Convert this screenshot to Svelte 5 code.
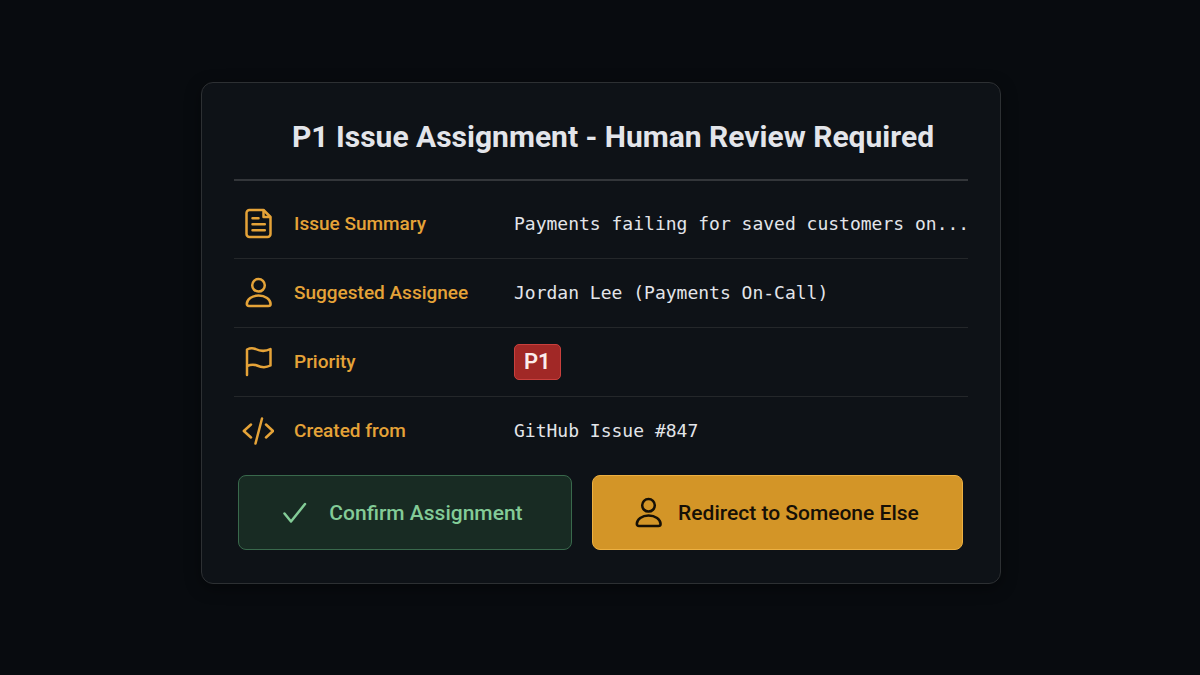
<script lang="ts">
  type IconName = "document" | "user" | "flag" | "code" | "check";

  type Field = {
    icon: IconName;
    label: string;
    value: string;
    isBadge?: boolean;
  };

  const fields: Field[] = [
    {
      icon: "document",
      label: "Issue Summary",
      value: "Payments failing for saved customers on..."
    },
    {
      icon: "user",
      label: "Suggested Assignee",
      value: "Jordan Lee (Payments On-Call)"
    },
    {
      icon: "flag",
      label: "Priority",
      value: "P1",
      isBadge: true
    },
    {
      icon: "code",
      label: "Created from",
      value: "GitHub Issue #847"
    }
  ];
</script>

{#snippet icon(name: IconName)}
  <svg class="icon" aria-hidden="true" viewBox="0 0 32 32">
    {#if name === "document"}
      <path d="M7.500 2H21.500L28.500 9V26a3 3 0 0 1-3 3H7.500a3 3 0 0 1-3-3V5a3 3 0 0 1 3-3Z" />
      <path d="M21.500 2.500V9H28M10.500 10.300H16.500M10.500 16.300H22.800M10.500 22.300H22.800" />
    {:else if name === "user"}
      <circle cx="16.500" cy="8.300" r="6.300" />
      <path d="M7 29c-1.500 0-2.200-.8-2.200-2C4.800 22.500 10 18.500 16.600 18.500S28.600 22.500 28.600 27c0 1.200-.7 2-2.200 2Z" />
    {:else if name === "flag"}
      <path d="M5 29V3.500C7 2.500 10 1.600 13.500 3C19 5.700 23 5.800 28.500 3V19.500C24 21.800 20 21.800 15 19.500C11 17.800 8 18.700 5 20" />
    {:else if name === "code"}
      <path d="M9 9.500 1.800 16l7.200 6.500M24 9.500l7 6.500-7 6.500M20 3.500l-6.500 25" />
    {:else}
      <path d="M1.500 16.500 8 24.500 22 7" />
    {/if}
  </svg>
{/snippet}

<main class="page">
  <section class="card" aria-labelledby="card-title">
    <header class="card-head">
      <h1 id="card-title">P1 Issue Assignment - Human Review Required</h1>
    </header>

    <dl class="fields">
      {#each fields as field (field.label)}
        <div class="field">
          {@render icon(field.icon)}
          <dt>{field.label}</dt>
          <dd>
            {#if field.isBadge}
              <span class="badge">{field.value}</span>
            {:else}
              {field.value}
            {/if}
          </dd>
        </div>
      {/each}
    </dl>

    <div class="actions">
      <button class="confirm" type="button">
        {@render icon("check")}
        <span>Confirm Assignment</span>
      </button>
      <button class="redirect" type="button">
        {@render icon("user")}
        <span>Redirect to Someone Else</span>
      </button>
    </div>
  </section>
</main>

<style>
  :global(body) {
    margin: 0;
    background: #080b0f;
  }

  .page {
    display: flex;
    align-items: center;
    justify-content: center;
    box-sizing: border-box;
    min-height: 100vh;
    padding: 14px 16px 24px 18px;
    color: #e3e5ea;
    font-family: Roboto, "Liberation Sans", sans-serif;
  }

  .card {
    box-sizing: border-box;
    width: 100%;
    max-width: 800px;
    padding: 0 32px 33px;
    border: 1px solid #2d3033;
    border-radius: 12px;
    background: #0e1217;
    box-shadow: 0 4px 16px rgb(0 0 0 / 40%);
  }

  .card-head {
    padding: 34px 0 22px 58px;
    border-bottom: 2px solid #33363a;
  }

  h1 {
    margin: 0;
    font-weight: 700;
    font-size: 30px;
    line-height: 40px;
  }

  .fields {
    margin: 0;
    padding: 9px 0;
  }

  .field {
    display: grid;
    grid-template-columns: 32px 200px 1fr;
    column-gap: 20px;
    align-items: center;
    box-sizing: border-box;
    min-height: 69px;
    padding-left: 8px;
    border-bottom: 1px solid #24272a;

    &:last-child {
      border-bottom: 0;
    }
  }

  .icon {
    flex: none;
    width: 32px;
    height: 32px;
    fill: none;
    stroke: currentColor;
    stroke-width: 2.5;
    stroke-linecap: round;
    stroke-linejoin: round;
  }

  .field .icon,
  dt {
    color: #e5a338;
  }

  dt {
    font-weight: 500;
    font-size: 19px;
    line-height: 24px;
  }

  dd {
    margin: 0;
    font-size: 18px;
    line-height: 24px;
    font-family: "DejaVu Sans Mono", "Liberation Mono", monospace;
    white-space: nowrap;
  }

  .badge {
    display: inline-block;
    padding: 4px 9px;
    border: 1px solid #c9403d;
    border-radius: 5px;
    background: #a12826;
    color: #fbeceb;
    font-weight: 600;
    font-size: 22px;
    line-height: 26px;
    font-family: Roboto, "Liberation Sans", sans-serif;
  }

  .actions {
    display: grid;
    grid-template-columns: 9fr 10fr;
    gap: 20px;
    padding: 0 5px 0 4px;
  }

  button {
    display: flex;
    gap: 14px;
    align-items: center;
    justify-content: center;
    min-height: 75px;
    padding: 10px 20px 8px 16px;
    border: 1px solid;
    border-radius: 8px;
    font: inherit;
    font-weight: 500;
    font-size: 21px;
    line-height: 24px;
    cursor: pointer;
  }

  .confirm {
    border-color: #39694c;
    background: #182b23;
    color: #83cc97;
  }

  .redirect {
    border-color: #edb041;
    background: #d39527;
    color: #161006;
  }
</style>
